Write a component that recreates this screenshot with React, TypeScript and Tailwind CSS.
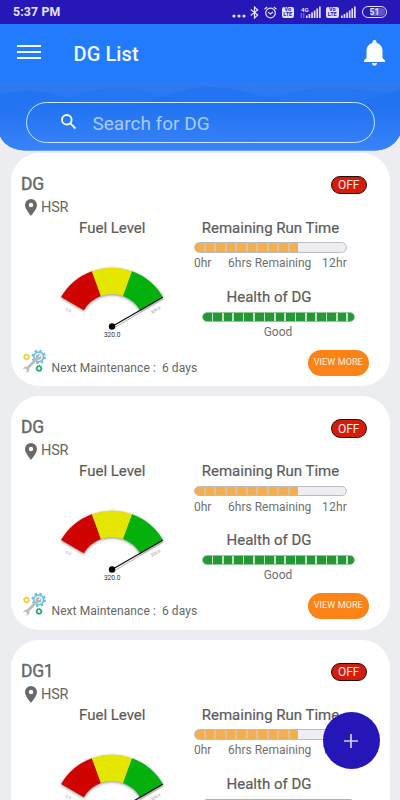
import React from "react";

const polar = (r: number, deg: number) => {
  const a = (deg * Math.PI) / 180;
  return `${(60 + r * Math.cos(a)).toFixed(2)} ${(65.5 - r * Math.sin(a)).toFixed(2)}`;
};
const sector = (from: number, to: number) =>
  `M${polar(58.8, from)}A58.8 58.8 0 0 1 ${polar(58.8, to)}L${polar(32.5, to)}A32.5 32.5 0 0 0 ${polar(32.5, from)}Z`;

function Gauge() {
  return (
    <svg width="120" height="82" viewBox="0 0 120 82" className="block overflow-visible">
      <g style={{ filter: "drop-shadow(0 1px 1.5px rgba(0,0,0,.45))" }}>
        <path d={sector(150, 110)} fill="#cf0300" />
        <path d={sector(110, 70)} fill="#e5e600" />
        <path d={sector(70, 30)} fill="#03b00c" />
      </g>
      <path d="M61 67.5L111 38" stroke="#999" strokeWidth="1.2" opacity=".6" />
      <path d="M60 65.5L110.8 36.2" stroke="#111" strokeWidth="1.3" />
      <circle cx="60" cy="65.5" r="3.2" fill="#050505" />
      <text x="16.5" y="50.5" fontSize="4" fill="#999" textAnchor="middle" transform="rotate(28 16.5 49)" fontFamily="Roboto, sans-serif">0.0</text>
      <text x="103.5" y="50.5" fontSize="4" fill="#888" textAnchor="middle" transform="rotate(-28 103.5 49)" fontFamily="Roboto, sans-serif">320.0</text>
      <text x="60.2" y="76.2" fontSize="6.6" fill="#333" textAnchor="middle" fontFamily="Roboto, sans-serif">320.0</text>
    </svg>
  );
}

function ToolsIcon() {
  return (
    <svg width="25" height="25" viewBox="0 0 25 25" className="block">
      <circle cx="16.7" cy="7.8" r="6.3" fill="none" stroke="#62bde8" strokeWidth="1.8" strokeDasharray="2.4 2.55" />
      <circle cx="16.7" cy="7.8" r="4.9" fill="#e9f4fa" stroke="#62bde8" strokeWidth="1.5" />
      <path d="M15.5 9L6 18.5" stroke="#bcbcbc" strokeWidth="2.7" />
      <circle cx="16.6" cy="8" r="2.7" fill="#b5b5b5" />
      <path d="M16.6 8L19 5.6" stroke="#e9f4fa" strokeWidth="1.2" />
      <path d="M1 20.2C1.8 17.5 5 16.8 6.6 18.4C8.2 20 7.2 23 4.4 23.8L5.2 21.2L3.4 19.4Z" fill="#bcbcbc" />
      <circle cx="4.6" cy="8" r="2.3" fill="none" stroke="#f2cb35" strokeWidth="1.4" />
      <circle cx="4.6" cy="8" r="3" fill="none" stroke="#f2cb35" strokeWidth=".9" strokeDasharray="1.2 1.1" />
      <circle cx="17" cy="19.4" r="2.2" fill="none" stroke="#29a871" strokeWidth="1.6" />
      <circle cx="17" cy="19.4" r="3" fill="none" stroke="#29a871" strokeWidth=".9" strokeDasharray="1.2 1.1" />
    </svg>
  );
}

function Card({ name }: { name: string }) {
  return (
    <section className="flex h-[233.5px] shrink-0 flex-col rounded-[28px] bg-white text-[#666]">
      <div className="mt-[22px] flex h-[21px] items-center justify-between pl-[10.5px] pr-[23px]">
        <h2 className="-mt-[2px] text-[17.5px] tracking-[-0.3px] [-webkit-text-stroke:0.35px]">{name}</h2>
        <span className="flex h-[18.5px] w-[35.5px] items-center justify-center rounded-full border-[1.3px] border-[#2b0c08] bg-[#d41c0c] text-[12px] leading-none text-[#ffe6e0]">OFF</span>
      </div>
      <div className="mt-[2.5px] flex h-[19px] items-center pl-[14.5px] text-[14.5px]">
        <svg width="12" height="17" viewBox="0 0 12 17" className="mr-[4px]">
          <path fillRule="evenodd" fill="#696969" d="M6 0a6 6 0 0 1 6 6c0 4.2-6 10.800-6 10.800S0 10.200 0 6a6 6 0 0 1 6-6Zm0 3.800a2.200 2.200 0 1 0 0 4.400a2.200 2.200 0 0 0 0-4.400Z" />
        </svg>
        <span className="tracking-[-0.2px]">HSR</span>
      </div>
      <div className="flex h-[125.5px]">
        <div className="flex w-[183.5px] flex-col items-center">
          <h3 className="ml-[20px] mt-[0.5px] h-[20px] text-[15px] leading-[20px] text-[#5c5c5c] [-webkit-text-stroke:0.2px]">Fuel Level</h3>
          <div className="ml-[20px] mt-[23px]"><Gauge /></div>
        </div>
        <div className="flex w-[162px] flex-col">
          <h3 className="mt-[0.5px] h-[20px] w-[153px] text-center text-[15px] leading-[20px] whitespace-nowrap text-[#5c5c5c] [-webkit-text-stroke:0.2px]">Remaining Run Time</h3>
          <div className="mt-[4.5px] flex h-[10.500px] w-[153px] overflow-hidden rounded-full border border-[#bdbdc1] bg-[#eeeef2]">
            <div className="flex w-[103px] gap-[2px] bg-[#d5c3a3]">
              {Array.from({ length: 10 }, (_, i) => <i key={i} className="grow bg-[#f5ae4d]" />)}
            </div>
          </div>
          <div className="mt-[3px] flex h-[15px] w-[153px] items-center justify-between text-[12px] whitespace-nowrap text-[#707070]">
            <span>0hr</span><span className="ml-[6px]">6hrs Remaining</span><span className="tracking-[0.2px]">12hr</span>
          </div>
          <h3 className="mt-[16px] h-[20px] w-[150px] text-center text-[15px] leading-[20px] text-[#5c5c5c] [-webkit-text-stroke:0.2px]">Health of DG</h3>
          <div className="ml-[8px] mt-[5px] flex h-[10px] w-[152.500px] shrink-0 gap-[1.600px] overflow-hidden rounded-full border border-[#8ec897] bg-[#bfe0c3]">
            {Array.from({ length: 14 }, (_, i) => <i key={i} className="w-[8.770px] shrink-0 bg-[#259736]" />)}
            <i className="grow bg-[#259736]" />
          </div>
          <p className="ml-[8px] mt-[2px] w-[152px] text-center text-[12px] leading-[16px] text-[#707070]">Good</p>
        </div>
      </div>
      <div className="mt-[5px] flex items-start pl-[11px] pr-[20.500px]">
        <div className="mt-[1px]"><ToolsIcon /></div>
        <p className="ml-[5px] mt-[11px] grow whitespace-pre text-[12px] leading-[18px] tracking-[0.08px]">Next Maintenance :  6 days</p>
        <button className="mt-[2px] flex h-[26px] w-[61.500px] items-center justify-center rounded-full bg-[#fc8317] text-[9px] tracking-[0.1px] whitespace-nowrap text-[#fff4e0]">VIEW MORE</button>
      </div>
    </section>
  );
}

function Signal() {
  return (
    <svg width="15" height="12" viewBox="0 0 15 12" fill="#e4defb">
      <path d="M0 9.500h1.700V12H0zM2.600 8h1.700v4H2.600zM5.200 6.500h1.700V12H5.200zM7.800 4.500h1.700V12H7.800zM10.400 2.500h1.700V12h-1.700zM13 .5h1.700V12H13z" />
    </svg>
  );
}

function Volte() {
  return (
    <span className="flex h-[11px] w-[12.500px] flex-col items-center justify-center rounded-[2px] bg-[#e4defb] text-[5.500px] leading-[5px] font-bold text-[#2516b8]">
      <span>Vo</span><span>LTE</span>
    </span>
  );
}

function StatusBar() {
  return (
    <div className="flex h-[24px] shrink-0 items-center bg-[#2617b9] pl-[13px] pr-[13px] text-[#e8e3fc]">
      <span className="text-[12.300px] font-bold tracking-[0.15px]">5:37 PM</span>
      <span className="grow" />
      <svg width="14" height="4" viewBox="0 0 14 4" className="mt-[7px]" fill="currentColor"><circle cx="2" cy="2" r="1.600" /><circle cx="7" cy="2" r="1.600" /><circle cx="12" cy="2" r="1.600" /></svg>
      <svg width="9" height="13" viewBox="0 0 9 13" className="ml-[4px]" fill="none" stroke="currentColor" strokeWidth="1.200"><path d="M.7 3.500L7.700 9L4.500 12V1L7.700 4L.7 9.500" /></svg>
      <svg width="13" height="13" viewBox="0 0 13 13" className="ml-[5px]" fill="none" stroke="currentColor" strokeWidth="1.200"><circle cx="6.500" cy="7" r="4.800" /><path d="M.6 3.200L3.200 1M12.400 3.200L9.800 1M4.200 6.300L6.500 8L9 6" /></svg>
      <span className="ml-[5px]"><Volte /></span>
      <span className="ml-[6px] flex w-[8px] flex-col justify-between self-center">
        <b className="pl-[1px] text-[6px] leading-[6px]">4G</b>
        <svg width="5" height="5" viewBox="0 0 5 5" stroke="#9b8fe6" strokeWidth=".9" fill="none"><path d="M1.200 0v5M3.800 0v5" /></svg>
      </span>
      <span className="-ml-[2px]"><Signal /></span>
      <span className="ml-[5px]"><Volte /></span>
      <span className="ml-[2.500px]"><Signal /></span>
      <span className="ml-[6px] flex h-[12px] w-[25px] items-center rounded-full border-[1.200px] border-[#e4defb] p-[1px]">
        <span className="flex h-full w-full items-center justify-center rounded-full bg-[linear-gradient(90deg,#2617b9_35%,#6053cd_35%)] text-[8.500px] leading-none font-bold">51</span>
      </span>
    </div>
  );
}

function HeaderBackdrop() {
  return (
    <svg className="absolute inset-0" width="400" height="127" viewBox="0 0 400 127">
      <defs>
        <linearGradient id="fade" x1="0" y1="0" x2="0" y2="1"><stop offset="0" stopColor="#2e7bf3" /><stop offset=".35" stopColor="#2876f4" /><stop offset="1" stopColor="#3983f8" /></linearGradient>
        <linearGradient id="wave" x1="0" y1="0" x2="0" y2="1"><stop offset="0" stopColor="#146ae9" stopOpacity=".4" /><stop offset="1" stopColor="#287af5" stopOpacity="0" /></linearGradient>
        <clipPath id="shape"><path d="M0 0H400V111C395 121 386 126.500 374 126.500H27C13 126.500 4 121 0 112Z" /></clipPath>
      </defs>
      <g clipPath="url(#shape)">
        <path d="M0 0H400V127H0Z" fill="#227bfc" />
        <path d="M0 58H400V127H0Z" fill="url(#fade)" />
        <path d="M0 71C20 65 40 65 60 72C100 88 135 84 160 74C190 61 215 60 250 69C295 80 335 90 400 65V127H0Z" fill="url(#wave)" />
        <path d="M0 84C20 92 50 82 70 74C100 61 130 61 160 71C200 84 230 85 265 75C310 61 345 61 400 72V127H0Z" fill="url(#wave)" opacity=".6" />
      </g>
    </svg>
  );
}

export default function App() {
  return (
    <main className="relative flex h-[800px] w-[400px] flex-col overflow-hidden bg-[#ecedf1] font-['Roboto',sans-serif]">
      <StatusBar />
      <header className="relative h-[127px] shrink-0">
        <HeaderBackdrop />
        <div className="relative flex h-[78px] items-start pl-[17px] pr-[15px] text-[#f2fbff]">
          <div className="mt-[20.5px] flex w-[24px] flex-col gap-[4px]">
            <i className="h-[2px] bg-current" /><i className="h-[2px] bg-current" /><i className="h-[2px] bg-current" />
          </div>
          <h1 className="ml-[32.5px] mt-[16px] grow text-[20px] leading-[28px] font-medium tracking-[0.1px]">DG List</h1>
          <svg width="21" height="26" viewBox="0 0 21 26" fill="#fff" className="mt-[16px]">
            <path d="M10.500 0c1.300 0 2 .8 2 2v1c4 1 6 4 6 8v7l2.500 2.500V22H0v-1.500L2.500 18v-7c0-4 2-7 6-8V2c0-1.200.7-2 2-2ZM7.900 23h5.200c0 1.500-1 2.600-2.600 2.600S7.900 24.500 7.900 23Z" />
          </svg>
        </div>
        <div className="relative mx-[25.500px] flex h-[41px] items-center rounded-full border-[1.500px] border-[#c9eaff] pl-[33px]">
          <svg width="17" height="17" viewBox="0 0 17 17" fill="none" stroke="#f2fbff" strokeWidth="1.900" className="-mt-[2px]"><circle cx="6.800" cy="6.800" r="4.800" /><path d="M10.300 10.300L15.500 15.500" /></svg>
          <span className="ml-[16px] mt-[2px] text-[19px] leading-none text-[#a9cbfb]">Search for DG</span>
        </div>
      </header>
      <div className="mx-[10.500px] mt-[1.500px] flex flex-col gap-[10px]">
        <Card name="DG" />
        <Card name="DG" />
        <Card name="DG1" />
      </div>
      <button className="absolute top-[712px] left-[322.500px] flex size-[57px] items-center justify-center rounded-full bg-[#2516b8]">
        <svg width="14" height="14" viewBox="0 0 14 14" stroke="#d5d0f3" strokeWidth="1.700"><path d="M7 0V14M0 7H14" /></svg>
      </button>
    </main>
  );
}
